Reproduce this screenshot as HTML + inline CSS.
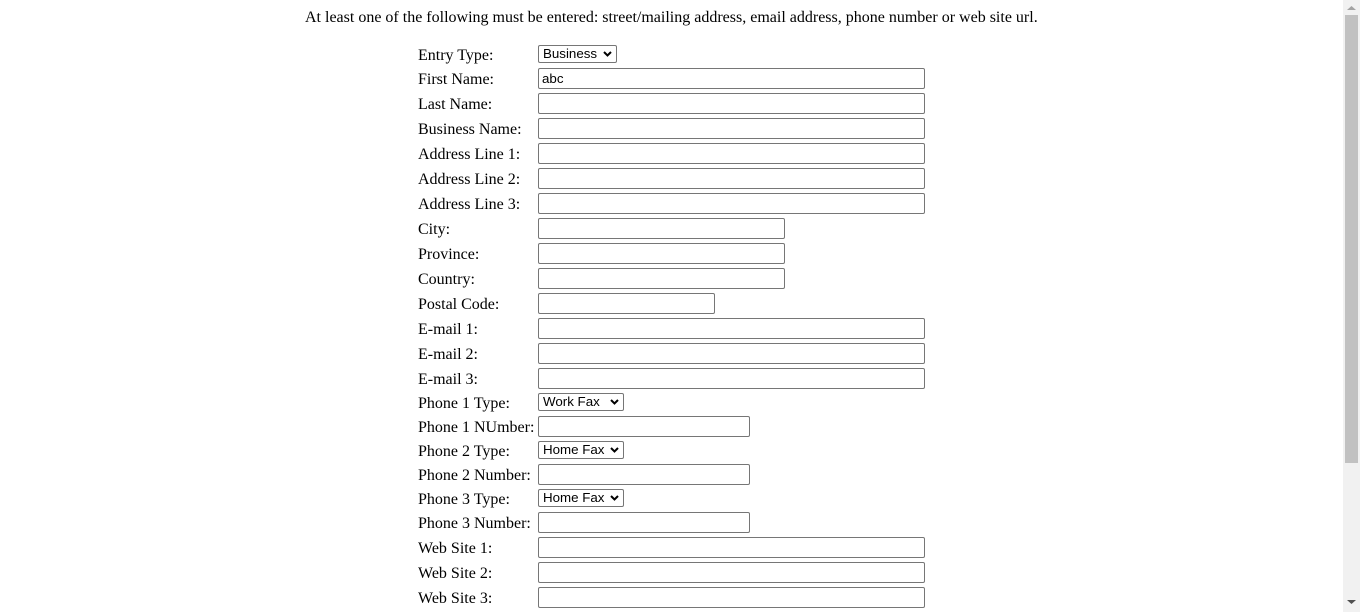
<!DOCTYPE html>
<html><head><style>
body{margin:0;width:1360px;height:612px;overflow:hidden;background:#fff;position:relative;font-family:"Liberation Serif",serif;font-size:16px;color:#000}
.l{position:absolute;left:418px;line-height:18px;white-space:nowrap;margin-top:2px}
.i{position:absolute;left:538px;height:19px;border:1px solid #767676;border-radius:2px;box-sizing:content-box;font-family:"Liberation Sans",sans-serif;font-size:13.33px;line-height:19px;padding-left:3px}
.s{position:absolute;left:538px;height:16px;border:1px solid #767676;border-radius:2px;font-family:"Liberation Sans",sans-serif;font-size:13.33px;line-height:16px;padding-left:4px}
.s svg{position:absolute;right:4px;top:5px}
#sb{position:absolute;left:1343px;top:0;width:17px;height:612px;background:#f1f1f1}
#th{position:absolute;left:1345px;top:15px;width:13px;height:448px;background:#c1c1c1}
</style></head><body>
<div style="position:absolute;left:305px;top:9px;line-height:18px;white-space:nowrap">At least one of the following must be entered: street/mailing address, email address, phone number or web site url.</div>
<div class="l" style="top:45px">Entry Type:</div><div class="s" style="top:45px;width:73px">Business<svg width="9" height="6"><path d="M1 1L4.5 4.5L8 1" stroke="#000" stroke-width="2" fill="none"/></svg></div>
<div class="l" style="top:69px">First Name:</div><div class="i" style="top:68px;width:382px">abc</div>
<div class="l" style="top:94px">Last Name:</div><div class="i" style="top:93px;width:382px"></div>
<div class="l" style="top:119px">Business Name:</div><div class="i" style="top:118px;width:382px"></div>
<div class="l" style="top:144px">Address Line 1:</div><div class="i" style="top:143px;width:382px"></div>
<div class="l" style="top:169px">Address Line 2:</div><div class="i" style="top:168px;width:382px"></div>
<div class="l" style="top:194px">Address Line 3:</div><div class="i" style="top:193px;width:382px"></div>
<div class="l" style="top:219px">City:</div><div class="i" style="top:218px;width:242px"></div>
<div class="l" style="top:244px">Province:</div><div class="i" style="top:243px;width:242px"></div>
<div class="l" style="top:269px">Country:</div><div class="i" style="top:268px;width:242px"></div>
<div class="l" style="top:294px">Postal Code:</div><div class="i" style="top:293px;width:172px"></div>
<div class="l" style="top:319px">E-mail 1:</div><div class="i" style="top:318px;width:382px"></div>
<div class="l" style="top:344px">E-mail 2:</div><div class="i" style="top:343px;width:382px"></div>
<div class="l" style="top:369px">E-mail 3:</div><div class="i" style="top:368px;width:382px"></div>
<div class="l" style="top:393px">Phone 1 Type:</div><div class="s" style="top:393px;width:80px">Work Fax<svg width="9" height="6"><path d="M1 1L4.5 4.5L8 1" stroke="#000" stroke-width="2" fill="none"/></svg></div>
<div class="l" style="top:417px">Phone 1 NUmber:</div><div class="i" style="top:416px;width:207px"></div>
<div class="l" style="top:441px">Phone 2 Type:</div><div class="s" style="top:441px;width:80px">Home Fax<svg width="9" height="6"><path d="M1 1L4.5 4.5L8 1" stroke="#000" stroke-width="2" fill="none"/></svg></div>
<div class="l" style="top:465px">Phone 2 Number:</div><div class="i" style="top:464px;width:207px"></div>
<div class="l" style="top:489px">Phone 3 Type:</div><div class="s" style="top:489px;width:80px">Home Fax<svg width="9" height="6"><path d="M1 1L4.5 4.5L8 1" stroke="#000" stroke-width="2" fill="none"/></svg></div>
<div class="l" style="top:513px">Phone 3 Number:</div><div class="i" style="top:512px;width:207px"></div>
<div class="l" style="top:538px">Web Site 1:</div><div class="i" style="top:537px;width:382px"></div>
<div class="l" style="top:563px">Web Site 2:</div><div class="i" style="top:562px;width:382px"></div>
<div class="l" style="top:588px">Web Site 3:</div><div class="i" style="top:587px;width:382px"></div>
<div id="sb"></div><div id="th"></div>
<svg style="position:absolute;left:1346px;top:5px" width="11" height="6"><path d="M1 5L5.5 1L10 5Z" fill="#a3a3a3"/></svg>
<svg style="position:absolute;left:1346px;top:599px" width="11" height="6"><path d="M1 1L5.5 5L10 1Z" fill="#505050"/></svg>
</body></html>
